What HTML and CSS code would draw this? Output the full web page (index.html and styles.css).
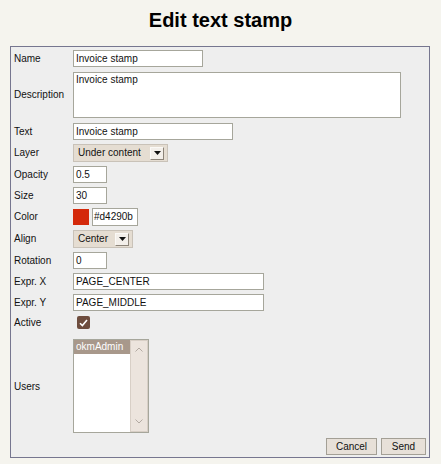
FILE: index.html
```html
<!DOCTYPE html>
<html>
<head>
<meta charset="utf-8">
<link rel="stylesheet" href="styles.css">
</head>
<body>
<h1 class="title">Edit text stamp</h1>
<div class="panel">
  <div class="form">
    <div class="lbl">Name</div>
    <div class="ctl"><div class="inp w-name">Invoice stamp</div></div>

    <div class="lbl">Description</div>
    <div class="ctl"><div class="area">Invoice stamp</div></div>

    <div class="lbl">Text</div>
    <div class="ctl"><div class="inp w-text">Invoice stamp</div></div>

    <div class="lbl">Layer</div>
    <div class="ctl"><div class="sel w-layer"><span class="sel-txt">Under content</span><span class="sel-btn"><svg width="7" height="4" viewBox="0 0 7 4"><path d="M0 0H7L3.5 4Z" fill="#111"/></svg></span></div></div>

    <div class="lbl">Opacity</div>
    <div class="ctl"><div class="inp w-small">0.5</div></div>

    <div class="lbl">Size</div>
    <div class="ctl"><div class="inp w-small">30</div></div>

    <div class="lbl">Color</div>
    <div class="ctl color-ctl"><span class="swatch"></span><div class="inp w-color">#d4290b</div></div>

    <div class="lbl">Align</div>
    <div class="ctl"><div class="sel w-align"><span class="sel-txt">Center</span><span class="sel-btn"><svg width="7" height="4" viewBox="0 0 7 4"><path d="M0 0H7L3.5 4Z" fill="#111"/></svg></span></div></div>

    <div class="lbl">Rotation</div>
    <div class="ctl"><div class="inp w-small">0</div></div>

    <div class="lbl">Expr. X</div>
    <div class="ctl"><div class="inp w-expr">PAGE_CENTER</div></div>

    <div class="lbl">Expr. Y</div>
    <div class="ctl"><div class="inp w-expr">PAGE_MIDDLE</div></div>

    <div class="lbl lbl-active">Active</div>
    <div class="ctl ctl-active"><span class="check"><svg width="9" height="8" viewBox="0 0 9 8"><path d="M1 4.2L3.4 6.6L8 1" fill="none" stroke="#fff" stroke-width="1.6"/></svg></span></div>

    <div class="lbl lbl-users">Users</div>
    <div class="ctl">
      <div class="list">
        <div class="opts"><div class="opt-sel">okmAdmin</div></div>
        <div class="scroll">
          <svg class="arr" width="8" height="5" viewBox="0 0 8 5"><path d="M0.5 4.5L4 1L7.5 4.5" fill="none" stroke="#b3aaa2" stroke-width="1"/></svg>
          <svg class="arr" width="8" height="5" viewBox="0 0 8 5"><path d="M0.5 0.5L4 4L7.5 0.5" fill="none" stroke="#b3aaa2" stroke-width="1"/></svg>
        </div>
      </div>
    </div>
  </div>
  <div class="buttons">
    <span class="btn btn-cancel">Cancel</span>
    <span class="btn btn-send">Send</span>
  </div>
</div>
</body>
</html>
```

FILE: styles.css
```css
html, body {
  margin: 0;
  padding: 0;
  background: #f5f4ee;
}
body {
  font-family: "Liberation Sans", Arial, sans-serif;
  font-size: 10px;
  color: #111;
}
.title {
  margin: 9px 0 14px 0;
  font-size: 20px;
  line-height: 23px;
  font-weight: bold;
  text-align: center;
  color: #000;
}
.panel {
  box-sizing: border-box;
  width: 420px;
  margin-left: 10px;
  border: 1px solid #76768f;
  background: #eeeeee;
  padding: 3px 3px 2px 3px;
}
.form {
  display: grid;
  grid-template-columns: 59px 1fr;
  row-gap: 4px;
  align-items: center;
}
.lbl {
  line-height: 12px;
  white-space: nowrap;
}
.lbl-active,
.ctl-active {
  margin-top: 1px;
}
.lbl-users {
  padding-top: 8px;
}
.ctl {
  display: flex;
  align-items: center;
}
.inp {
  box-sizing: border-box;
  height: 17px;
  line-height: 15px;
  border: 1px solid #a6a69b;
  background: #fff;
  padding-left: 2px;
  white-space: nowrap;
  overflow: hidden;
}
.w-name { width: 130px; }
.w-text { width: 160px; }
.w-small { width: 34px; }
.w-expr { width: 191px; }
.w-color { width: 46px; height: 18px; line-height: 16px; padding-left: 1px; }
.area {
  box-sizing: border-box;
  width: 328px;
  height: 46px;
  margin: 1px 0;
  border: 1px solid #a6a69b;
  background: #fff;
  padding: 1px 2px;
  line-height: 12px;
}
.sel {
  box-sizing: border-box;
  height: 18px;
  display: flex;
  align-items: center;
  justify-content: space-between;
  border: 1px solid #c9c2b8;
  background: #e5ddd2;
  padding: 0 3px 0 4px;
}
.w-layer { width: 95px; }
.w-align { width: 60px; }
.sel-txt {
  line-height: 14px;
  white-space: nowrap;
}
.sel-btn {
  box-sizing: border-box;
  width: 14px;
  height: 13px;
  display: flex;
  align-items: center;
  justify-content: center;
  background: #f3efea;
  border-top: 1px solid #fbf9f6;
  border-left: 1px solid #fbf9f6;
  border-right: 1px solid #8c8479;
  border-bottom: 1px solid #8c8479;
}
.color-ctl {
  gap: 3px;
}
.swatch {
  width: 16px;
  height: 16px;
  background: #d4290b;
}
.check {
  box-sizing: border-box;
  width: 13px;
  height: 13px;
  margin-left: 4px;
  border-radius: 2px;
  background: #6e4d3e;
  display: flex;
  align-items: center;
  justify-content: center;
}
.list {
  box-sizing: border-box;
  width: 76px;
  height: 94px;
  margin-top: 6px;
  border: 1px solid #a6a69b;
  background: #fff;
  display: flex;
}
.opts {
  flex: 1;
}
.opt-sel {
  background: #a8988b;
  color: #fff;
  height: 14px;
  line-height: 13px;
  padding-left: 2px;
}
.scroll {
  box-sizing: border-box;
  width: 18px;
  height: 100%;
  background: #ece4dd;
  border: 1px solid #d8cfc6;
  display: flex;
  flex-direction: column;
  align-items: center;
  justify-content: space-between;
  padding: 6px 0 7px 0;
}
.arr {
  display: block;
}
.buttons {
  display: flex;
  justify-content: flex-end;
  gap: 4px;
  margin-top: 5px;
}
.btn {
  box-sizing: border-box;
  height: 17px;
  line-height: 15px;
  border: 1px solid #a39f95;
  background: #e7e0d8;
  text-align: center;
  font-size: 10px;
}
.btn-cancel { width: 51px; }
.btn-send { width: 45px; }
```
